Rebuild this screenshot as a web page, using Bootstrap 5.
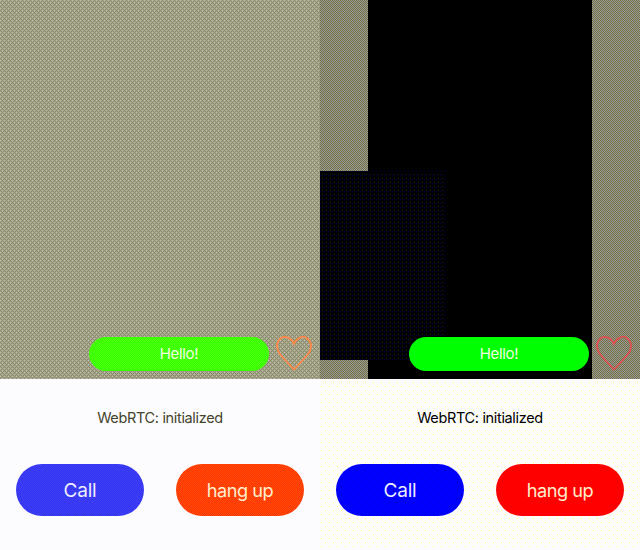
<!DOCTYPE html>
<html lang="en">
<head>
<meta charset="utf-8">
<meta name="viewport" content="width=device-width, initial-scale=1">
<title>WebRTC</title>
<link href="https://cdn.jsdelivr.net/npm/bootstrap@5.3.0/dist/css/bootstrap.min.css" rel="stylesheet">
<style>
body{font-family:Inter,Roboto,sans-serif;width:640px;height:550px;background:#fcfcff}
.phone{width:320px;height:550px;background:#fcfcff}
.stage{height:379px;padding:0 7px 8px}
.local .stage{background:conic-gradient(from 270deg at 1px 1px,#bbbba8 25%,transparent 0) 0 0/4px 4px,conic-gradient(from 270deg at 1px 1px,#bbbba8 25%,transparent 0) 2px 2px/4px 4px,repeating-conic-gradient(#a6a69c 0 25%,#8c8c58 0 50%) 0 0/2px 2px}
.remote .stage{background:repeating-conic-gradient(#9494a0 0 25%,#77773c 0 50%) 0 0/2px 2px}
.remote{background:conic-gradient(from 270deg at 1px 1px,#ffff55 25%,transparent 0) 1px 2px/8px 8px,conic-gradient(from 270deg at 1px 1px,#ffff55 25%,transparent 0) 5px 6px/8px 8px,#fcfcff}
.video{left:48px;width:224px;height:379px;background:#000}
.preview{top:171px;width:126px;height:189px;background:conic-gradient(from 270deg at 1px 1px,#000055 25%,transparent 0) 0 0/4px 4px,conic-gradient(from 270deg at 1px 1px,#222211 25%,transparent 0) 2px 3px/4px 4px,#000}
.hello{width:180px;height:34px;font-size:15px;letter-spacing:-.3px;color:#efffe0;background:repeating-conic-gradient(#33ff00 0 25%,#4dff0c 0 50%) 0 0/2px 2px;margin-right:6px}
.remote .hello{background:#0f0}
.status{font-size:14.5px;line-height:20px;padding-top:29px;letter-spacing:-.34px;color:#44442c}
.remote .status{color:#000}
.actions{padding:36px 16px 0;gap:32px}
.pill{width:128px;height:52px;font-size:19px;letter-spacing:-.25px;color:#fff;border:0;padding:2px 0 0}
.call,.call:hover{background:repeating-conic-gradient(#3333ff 0 25%,#4040e8 0 50%) 0 0/2px 2px;color:#eeeeff}
.hang,.hang:hover{background:repeating-conic-gradient(#ff3300 0 25%,#ff4d0c 0 50%) 0 0/2px 2px;color:#ffedcc;letter-spacing:-.5px;font-size:18.2px;padding-top:1px}
.remote .call{background:conic-gradient(from 270deg at 1px 1px,#0000aa 25%,transparent 0) 1px 2px/8px 8px,conic-gradient(from 270deg at 1px 1px,#0000aa 25%,transparent 0) 5px 6px/8px 8px,#00f}
.remote .hang{background:#f00}
.heart{fill:none;stroke:#ff8848;stroke-width:1.8}
.remote .heart{stroke:#dd5050}
</style>
</head>
<body class="d-flex overflow-hidden">
<section class="phone local">
<div class="stage position-relative d-flex align-items-end justify-content-end">
<div class="hello rounded-pill d-flex align-items-center justify-content-center">Hello!</div>
<svg class="heart" width="38" height="38" viewBox="0 0 38 38"><path d="M19 11C16 4 9 2 5 6C0 11 2 18 6 22.5L19 36.5L32 22.5C36 18 38 11 33 6C29 2 22 4 19 11Z"/></svg>
</div>
<div class="status text-center">WebRTC: initialized</div>
<div class="actions d-flex"><button class="btn pill call rounded-pill">Call</button><button class="btn pill hang rounded-pill">hang up</button></div>
</section>
<section class="phone remote">
<div class="stage position-relative d-flex align-items-end justify-content-end">
<div class="video position-absolute top-0"></div>
<div class="preview position-absolute start-0"></div>
<div class="hello position-relative rounded-pill d-flex align-items-center justify-content-center">Hello!</div>
<svg class="heart position-relative" width="38" height="38" viewBox="0 0 38 38"><path d="M19 11C16 4 9 2 5 6C0 11 2 18 6 22.5L19 36.5L32 22.5C36 18 38 11 33 6C29 2 22 4 19 11Z"/></svg>
</div>
<div class="status text-center">WebRTC: initialized</div>
<div class="actions d-flex"><button class="btn pill call rounded-pill">Call</button><button class="btn pill hang rounded-pill">hang up</button></div>
</section>
<script src="https://cdn.jsdelivr.net/npm/bootstrap@5.3.0/dist/js/bootstrap.bundle.min.js"></script>
</body>
</html>
